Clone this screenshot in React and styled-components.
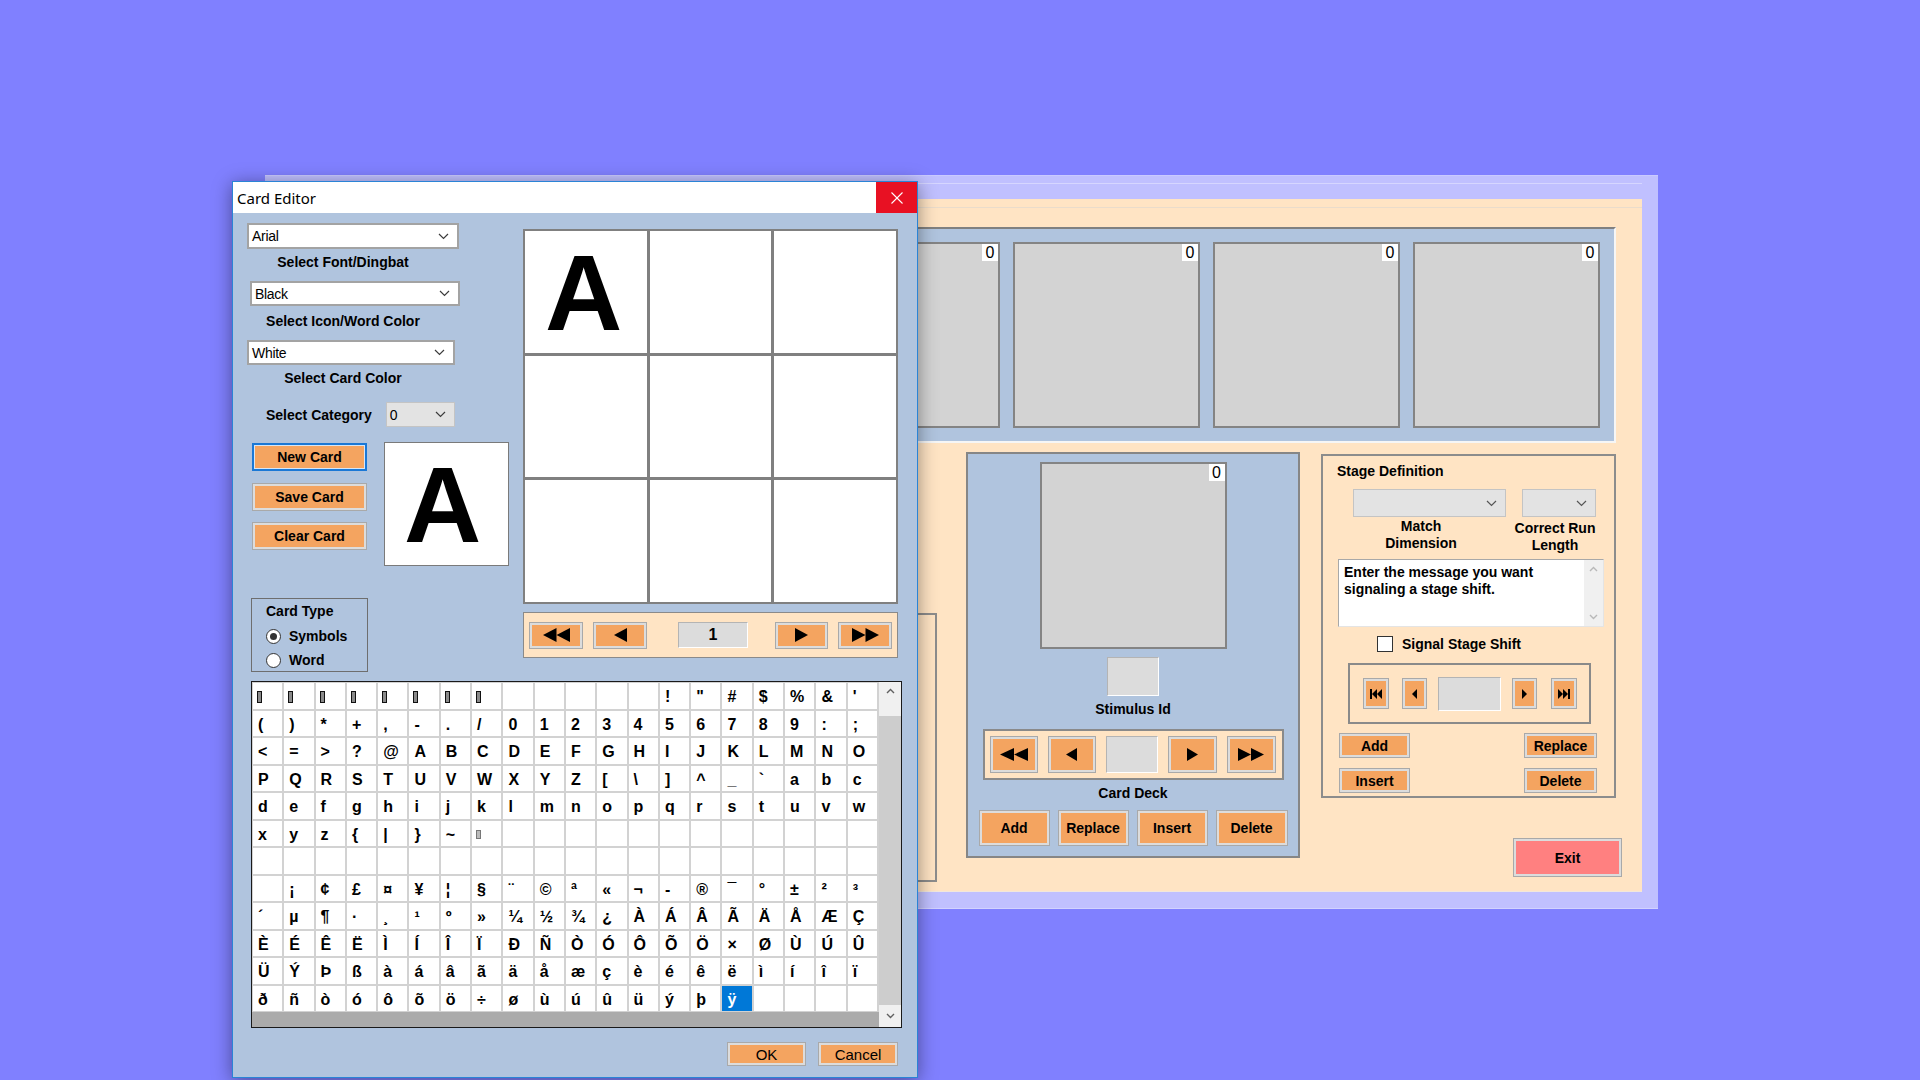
import React from 'react';
import styled, { createGlobalStyle } from 'styled-components';

const Global = createGlobalStyle`
  html, body { margin: 0; padding: 0; }
  body {
    width: 1920px; height: 1080px; overflow: hidden;
    background: #8080ff;
    font-family: "Liberation Sans", Arial, sans-serif;
    color: #000;
  }
  #root { position: relative; width: 1920px; height: 1080px; }
`;

const Desktop = styled.div`
  position: relative;
  width: 1920px;
  height: 1080px;
  background: #8080ff;
  overflow: hidden;
`;

/* ---------- shared ---------- */
const Btn = styled.div`
  box-sizing: border-box;
  flex: none;
  width: ${p => p.$w}px;
  height: ${p => p.$h}px;
  margin-top: ${p => p.$mt || 0}px;
  margin-left: ${p => p.$ml || 0}px;
  background: ${p => p.$bg || '#f4a460'};
  border: ${p => (p.$focus ? '2px solid #1a78d6' : '1px solid #a9a9a9')};
  box-shadow: ${p => (p.$focus ? 'inset 0 0 0 1px #d6e6f6' : 'inset 0 0 0 2px #dcdcdc')};
  display: flex;
  align-items: center;
  justify-content: center;
  font-size: ${p => (p.$regular ? 15 : 14)}px;
  font-weight: ${p => (p.$regular ? 400 : 700)};
  color: #000;
  white-space: nowrap;
`;

const Label = styled.div`
  font-size: 14px;
  font-weight: 700;
  line-height: 16px;
  white-space: nowrap;
  margin-top: ${p => p.$mt || 0}px;
  margin-left: ${p => p.$ml || 0}px;
  text-align: ${p => p.$align || 'left'};
  width: ${p => (p.$w ? `${p.$w}px` : 'auto')};
  flex: none;
`;

const Sunken = styled.div`
  box-sizing: border-box;
  flex: none;
  width: ${p => p.$w}px;
  height: ${p => p.$h}px;
  margin-top: ${p => p.$mt || 0}px;
  margin-left: ${p => p.$ml || 0}px;
  background: #dcdcdc;
  border: 1px solid;
  border-color: #b4b4b4 #ffffff #ffffff #b4b4b4;
  display: flex;
  align-items: center;
  justify-content: center;
  font-size: 16px;
  font-weight: 700;
`;

const Chevron = ({ color = '#3c3c3c' }) => (
  <svg width="11" height="7" viewBox="0 0 11 7" style={{ flex: 'none' }}>
    <polyline points="1,1 5.5,5.5 10,1" fill="none" stroke={color} strokeWidth="1.2" />
  </svg>
);

const ComboBox = styled.div`
  box-sizing: border-box;
  flex: none;
  width: ${p => p.$w}px;
  height: ${p => p.$h}px;
  margin-top: ${p => p.$mt || 0}px;
  margin-left: ${p => p.$ml || 0}px;
  background: ${p => (p.$disabled ? '#e3e3e3' : '#ffffff')};
  border: ${p => (p.$disabled ? '1px solid #c4c4c4' : '2px solid #a3a3a3')};
  display: flex;
  align-items: center;
  padding: 0 8px 0 3px;
  font-size: 14px;
  letter-spacing: -0.3px;
  color: #000;
`;

const ComboText = styled.span`
  flex: 1;
`;

/* Nav glyphs */
const NavGlyph = ({ kind, w, h }) => {
  const half = w / 2;
  let shapes;
  if (kind === 'prev') shapes = <polygon points={`${w},0 0,${h / 2} ${w},${h}`} />;
  else if (kind === 'next') shapes = <polygon points={`0,0 ${w},${h / 2} 0,${h}`} />;
  else if (kind === 'first')
    shapes = (
      <>
        <polygon points={`${half},0 0,${h / 2} ${half},${h}`} />
        <polygon points={`${w},0 ${half},${h / 2} ${w},${h}`} />
      </>
    );
  else if (kind === 'last')
    shapes = (
      <>
        <polygon points={`0,0 ${half},${h / 2} 0,${h}`} />
        <polygon points={`${half},0 ${w},${h / 2} ${half},${h}`} />
      </>
    );
  else if (kind === 'barFirst')
    shapes = (
      <>
        <rect x="0" y="0" width="2" height={h} />
        <polygon points={`${2 + (w - 2) / 2},0 2,${h / 2} ${2 + (w - 2) / 2},${h}`} />
        <polygon points={`${w},0 ${2 + (w - 2) / 2},${h / 2} ${w},${h}`} />
      </>
    );
  else if (kind === 'barLast')
    shapes = (
      <>
        <polygon points={`0,0 ${(w - 2) / 2},${h / 2} 0,${h}`} />
        <polygon points={`${(w - 2) / 2},0 ${w - 2},${h / 2} ${(w - 2) / 2},${h}`} />
        <rect x={w - 2} y="0" width="2" height={h} />
      </>
    );
  return (
    <svg width={w} height={h} viewBox={`0 0 ${w} ${h}`} fill="#000" style={{ display: 'block' }}>
      {shapes}
    </svg>
  );
};

/* ---------- Main window ---------- */
const MainWindow = styled.div`
  position: absolute;
  left: 265px;
  top: 175px;
  width: 1393px;
  height: 734px;
  box-sizing: border-box;
  background: #c0c0ff;
  border-top: 1px solid #cacaff;
  border-bottom: 1px solid #d2d2ff;
  padding: 7px 16px 16px 16px;
  display: flex;
  flex-direction: column;
`;

const MainRule = styled.div`
  flex: none;
  height: 1px;
  background: #d6d6ff;
  margin-bottom: 15px;
`;

const Peach = styled.div`
  flex: 1;
  background: #ffe4c4;
  display: flex;
  flex-direction: column;
  border-bottom: 1px solid #f1e7dc;
`;

const PeachRule = styled.div`
  flex: none;
  height: 1px;
  margin-top: 8px;
  background: #eadccb;
`;

const TopPanel = styled.div`
  flex: none;
  box-sizing: border-box;
  margin-top: 19px;
  margin-left: 119px;
  width: 1216px;
  height: 216px;
  background: #b0c4de;
  border: 2px solid;
  border-color: #808080 #f6f6f6 #f6f6f6 #808080;
  display: flex;
  justify-content: flex-end;
  gap: 13px;
  padding: 13px 14px 0 0;
`;

const Card = styled.div`
  position: relative;
  flex: none;
  box-sizing: border-box;
  width: 187px;
  height: ${p => p.$h || 186}px;
  margin-top: ${p => p.$mt || 0}px;
  background: #d3d3d3;
  border: 2px solid #848484;
`;

const CountBadge = styled.div`
  position: absolute;
  top: 0;
  right: 0;
  width: 16px;
  height: 17px;
  background: #fff;
  font-size: 16px;
  line-height: 17px;
  text-align: center;
`;

const LowerRow = styled.div`
  flex: none;
  display: flex;
  align-items: flex-start;
  margin-top: 9px;
`;

const HiddenBox = styled.div`
  flex: none;
  box-sizing: border-box;
  margin-left: 19px;
  margin-top: 161px;
  width: 637px;
  height: 269px;
  border: 2px solid #8c8c8c;
  background: #ffe4c4;
`;

const DeckPanel = styled.div`
  flex: none;
  box-sizing: border-box;
  margin-left: 29px;
  width: 334px;
  height: 406px;
  background: #b0c4de;
  border: 2px solid #868686;
  display: flex;
  flex-direction: column;
  align-items: center;
  padding-top: 8px;
`;

const NavStrip = styled.div`
  flex: none;
  box-sizing: border-box;
  width: ${p => p.$w}px;
  height: ${p => p.$h}px;
  margin-top: ${p => p.$mt || 0}px;
  margin-left: ${p => p.$ml || 0}px;
  background: #ffe4c4;
  border: ${p => p.$bw || 2}px solid #8a8a8a;
  display: flex;
  align-items: center;
  padding-left: ${p => p.$pl}px;
  gap: ${p => (p.$gap ? `${p.$gap}px` : '0')};
`;

const ButtonRow = styled.div`
  flex: none;
  display: flex;
  gap: ${p => p.$gap}px;
  margin-top: ${p => p.$mt || 0}px;
`;

const RightCol = styled.div`
  flex: none;
  margin-left: 21px;
  display: flex;
  flex-direction: column;
  align-items: flex-start;
`;

const StageDef = styled.div`
  flex: none;
  box-sizing: border-box;
  margin-top: 2px;
  width: 295px;
  height: 344px;
  background: #ffe4c4;
  border: 2px solid #8c8c8c;
  display: flex;
  flex-direction: column;
  align-items: flex-start;
`;

const ComboRow = styled.div`
  flex: none;
  display: flex;
  align-items: flex-start;
  margin-top: 10px;
  margin-left: 30px;
  gap: 16px;
`;

const ComboCol = styled.div`
  flex: none;
  width: ${p => p.$w}px;
  display: flex;
  flex-direction: column;
  align-items: center;
`;

const TwoLine = styled.div`
  font-size: 14px;
  font-weight: 700;
  line-height: 17px;
  text-align: center;
  white-space: nowrap;
  margin-top: ${p => p.$mt}px;
  margin-left: ${p => p.$dx || 0}px;
`;

const MessageBox = styled.div`
  flex: none;
  box-sizing: border-box;
  width: 266px;
  height: 68px;
  margin-top: 5px;
  margin-left: 15px;
  background: #fff;
  border: 1px solid;
  border-color: #a8a8a8 #e4e4e4 #e4e4e4 #a8a8a8;
  display: flex;
`;

const MessageText = styled.div`
  flex: 1;
  padding: 4px 0 0 5px;
  font-size: 14px;
  font-weight: 700;
  line-height: 17px;
`;

const VScroll = styled.div`
  flex: none;
  width: ${p => p.$w}px;
  background: #f0f0f0;
  display: flex;
  flex-direction: column;
  align-items: center;
  justify-content: space-between;
  padding: 6px 0;
  box-sizing: border-box;
`;

const CheckRow = styled.div`
  flex: none;
  display: flex;
  align-items: center;
  gap: 9px;
  margin-top: 9px;
  margin-left: 54px;
  height: 16px;
`;

const CheckBox = styled.div`
  box-sizing: border-box;
  width: 16px;
  height: 16px;
  background: #fff;
  border: 1px solid #333;
`;

const StageBtnGrid = styled.div`
  flex: none;
  width: 258px;
  margin-top: 9px;
  margin-left: 16px;
  display: grid;
  grid-template-columns: 71px 73px;
  justify-content: space-between;
  row-gap: 10px;
`;

/* ---------- Dialog ---------- */
const Dialog = styled.div`
  position: absolute;
  left: 232px;
  top: 181px;
  width: 686px;
  height: 897px;
  box-sizing: border-box;
  border: 1px solid #2a84d6;
  background: #b0c4de;
  box-shadow: 0 3px 18px rgba(0, 0, 0, 0.42);
  display: flex;
  flex-direction: column;
`;

const TitleBar = styled.div`
  flex: none;
  height: 31px;
  background: #fff;
  display: flex;
  align-items: center;
`;

const TitleText = styled.div`
  padding-left: 4px;
  font-family: "Noto Sans", "Open Sans", sans-serif;
  font-size: 15px;
  color: #000;
`;

const CloseBtn = styled.div`
  margin-left: auto;
  width: 41px;
  height: 31px;
  background: #e81123;
  display: flex;
  align-items: center;
  justify-content: center;
`;

const DialogBody = styled.div`
  flex: 1;
  display: flex;
  flex-direction: column;
  padding: 10px 18px 0 14px;
`;

const TopSection = styled.div`
  flex: none;
  display: flex;
  align-items: flex-start;
  gap: 14px;
`;

const LeftCol = styled.div`
  flex: none;
  width: 262px;
  display: flex;
  flex-direction: column;
  align-items: flex-start;
`;

const CategoryRow = styled.div`
  flex: none;
  display: flex;
  align-items: center;
  height: 25px;
  margin-top: 16px;
`;

const ActionRow = styled.div`
  flex: none;
  display: flex;
  align-items: flex-start;
  margin-top: 15px;
`;

const ActionButtons = styled.div`
  flex: none;
  margin-left: 5px;
  width: 115px;
  display: flex;
  flex-direction: column;
`;

const Preview = styled.div`
  flex: none;
  box-sizing: border-box;
  margin-left: 17px;
  width: 125px;
  height: 124px;
  background: #fff;
  border: 1px solid #7a7a7a;
  overflow: hidden;
`;

const BigGlyph = styled.div`
  font-family: "Liberation Sans", Arial, sans-serif;
  font-weight: 700;
  font-size: 107px;
  line-height: 1;
  padding: ${p => p.$pt}px 0 0 ${p => p.$pl}px;
`;

const CardTypeBox = styled.div`
  flex: none;
  box-sizing: border-box;
  margin-top: 32px;
  margin-left: 4px;
  width: 117px;
  height: 74px;
  border: 1px solid #6e6e6e;
  padding: 4px 0 0 14px;
  display: flex;
  flex-direction: column;
`;

const RadioRow = styled.div`
  display: flex;
  align-items: center;
  gap: 8px;
  height: 16px;
  margin-top: ${p => p.$mt}px;
  font-size: 14px;
  font-weight: 700;
`;

const Radio = styled.div`
  box-sizing: border-box;
  width: 15px;
  height: 15px;
  border-radius: 50%;
  border: 1px solid #333;
  background: #fff;
  display: flex;
  align-items: center;
  justify-content: center;
  &::after {
    content: '';
    display: ${p => (p.$on ? 'block' : 'none')};
    width: 7px;
    height: 7px;
    border-radius: 50%;
    background: #333;
  }
`;

const RightColDlg = styled.div`
  flex: none;
  width: 375px;
  margin-top: 6px;
  display: flex;
  flex-direction: column;
`;

const Grid3 = styled.div`
  width: 375px;
  height: 375px;
  box-sizing: border-box;
  background: #808080;
  padding: 2px;
  display: grid;
  grid-template-columns: repeat(3, 1fr);
  grid-template-rows: repeat(3, 1fr);
  gap: 3px;
`;

const GridCell = styled.div`
  background: #fff;
  overflow: hidden;
`;

const CharGridBox = styled.div`
  flex: none;
  box-sizing: border-box;
  margin-top: 9px;
  margin-left: 4px;
  width: 651px;
  height: 347px;
  border: 1px solid #1a1a1a;
  background: #ababab;
  display: flex;
  align-items: flex-start;
`;

const CellArea = styled.div`
  flex: 1;
  display: grid;
  grid-template-columns: repeat(20, 1fr);
  grid-auto-rows: 25.5px;
  gap: 2px;
  padding: 1px 2px 1px 1px;
  background: #d2d2d2;
`;

const CharCell = styled.div`
  background: ${p => (p.$sel ? '#0078d7' : '#fff')};
  color: ${p => (p.$sel ? '#fff' : '#000')};
  font-family: "Liberation Sans", Arial, sans-serif;
  font-weight: 700;
  font-size: 16px;
  line-height: 25.5px;
  padding: 2px 0 0 5px;
  box-sizing: border-box;
  white-space: nowrap;
  overflow: hidden;
  display: flex;
  align-items: center;
`;

const Tofu = styled.span`
  display: inline-block;
  box-sizing: border-box;
  width: 5px;
  height: ${p => (p.$light ? 9 : 12)}px;
  border: 1.5px solid ${p => (p.$light ? '#777' : '#111')};
  background: ${p => (p.$light ? '#bbb' : '#8a8a8a')};
  margin-left: -1px;
`;

const GridScroll = styled.div`
  flex: none;
  align-self: stretch;
  width: 22px;
  display: flex;
  flex-direction: column;
`;

const ScrollCap = styled.div`
  flex: none;
  height: ${p => p.$h}px;
  background: #f0f0f0;
  display: flex;
  align-items: ${p => p.$align || 'center'};
  justify-content: center;
  padding-top: ${p => p.$pt || 0}px;
  box-sizing: border-box;
`;

const ScrollThumb = styled.div`
  flex: 1;
  background: #cdcdcd;
`;

const Footer = styled.div`
  flex: none;
  display: flex;
  justify-content: flex-end;
  gap: 12px;
  margin-top: 14px;
  margin-right: 1px;
`;

const ArrowSmall = ({ up, color = '#606060' }) => (
  <svg width="9" height="6" viewBox="0 0 9 6">
    <polyline
      points={up ? '1,5 4.5,1.5 8,5' : '1,1 4.5,4.5 8,1'}
      fill="none"
      stroke={color}
      strokeWidth="1.4"
    />
  </svg>
);

function charFor(c) {
  if (c >= 0x14 && c <= 0x1b) return <Tofu />;
  if (c === 0x7f) return <Tofu $light />;
  if (c <= 0x20 || (c >= 0x80 && c <= 0xa0) || c > 0xff) return null;
  if (c === 0xad) return '-';
  return String.fromCharCode(c);
}

const codes = Array.from({ length: 240 }, (_, i) => 0x14 + i);

export default function App() {
  return (
    <Desktop>
      <Global />

      <MainWindow>
        <MainRule />
        <Peach>
          <PeachRule />
          <TopPanel>
            {[0, 1, 2, 3, 4, 5].map(i => (
              <Card key={i}>
                <CountBadge>0</CountBadge>
              </Card>
            ))}
          </TopPanel>

          <LowerRow>
            <HiddenBox />

            <DeckPanel>
              <Card $h={187}>
                <CountBadge>0</CountBadge>
              </Card>
              <Sunken $w={52} $h={39} $mt={8} />
              <Label $mt={5}>Stimulus Id</Label>
              <NavStrip $w={301} $h={51} $mt={12} $pl={5} $gap={10}>
                <Btn $w={48} $h={37}><NavGlyph kind="first" w={28} h={13} /></Btn>
                <Btn $w={48} $h={37}><NavGlyph kind="prev" w={11} h={13} /></Btn>
                <Sunken $w={52} $h={37} />
                <Btn $w={49} $h={37}><NavGlyph kind="next" w={11} h={13} /></Btn>
                <Btn $w={49} $h={37}><NavGlyph kind="last" w={26} h={13} /></Btn>
              </NavStrip>
              <Label $mt={5}>Card Deck</Label>
              <ButtonRow $gap={8} $mt={9}>
                <Btn $w={71} $h={36}>Add</Btn>
                <Btn $w={71} $h={36}>Replace</Btn>
                <Btn $w={71} $h={36}>Insert</Btn>
                <Btn $w={72} $h={36}>Delete</Btn>
              </ButtonRow>
            </DeckPanel>

            <RightCol>
              <StageDef>
                <Label $mt={7} $ml={14}>Stage Definition</Label>
                <ComboRow>
                  <ComboCol $w={153}>
                    <ComboBox $w={153} $h={28} $disabled>
                      <ComboText />
                      <Chevron color="#555" />
                    </ComboBox>
                    <TwoLine $mt={1} $dx={-17}>Match<br />Dimension</TwoLine>
                  </ComboCol>
                  <ComboCol $w={74}>
                    <ComboBox $w={74} $h={28} $disabled>
                      <ComboText />
                      <Chevron color="#555" />
                    </ComboBox>
                    <TwoLine $mt={3} $dx={-8}>Correct Run<br />Length</TwoLine>
                  </ComboCol>
                </ComboRow>
                <MessageBox>
                  <MessageText>
                    Enter the message you want
                    <br />
                    signaling a stage shift.
                  </MessageText>
                  <VScroll $w={19}>
                    <ArrowSmall up color="#b8b8b8" />
                    <ArrowSmall color="#b8b8b8" />
                  </VScroll>
                </MessageBox>
                <CheckRow>
                  <CheckBox />
                  <Label>Signal Stage Shift</Label>
                </CheckRow>
                <NavStrip $w={243} $h={61} $mt={11} $ml={25} $pl={13}>
                  <Btn $w={26} $h={31}><NavGlyph kind="barFirst" w={12} h={10} /></Btn>
                  <Btn $w={25} $h={31} $ml={13}><NavGlyph kind="prev" w={5} h={10} /></Btn>
                  <Sunken $w={63} $h={34} $ml={11} />
                  <Btn $w={25} $h={31} $ml={11}><NavGlyph kind="next" w={5} h={10} /></Btn>
                  <Btn $w={26} $h={31} $ml={14}><NavGlyph kind="barLast" w={12} h={10} /></Btn>
                </NavStrip>
                <StageBtnGrid>
                  <Btn $w={71} $h={25}>Add</Btn>
                  <Btn $w={73} $h={25}>Replace</Btn>
                  <Btn $w={71} $h={25}>Insert</Btn>
                  <Btn $w={73} $h={25}>Delete</Btn>
                </StageBtnGrid>
              </StageDef>
              <Btn $w={109} $h={39} $mt={40} $ml={192} $bg="#ff8080">Exit</Btn>
            </RightCol>
          </LowerRow>
        </Peach>
      </MainWindow>

      <Dialog>
        <TitleBar>
          <TitleText>Card Editor</TitleText>
          <CloseBtn>
            <svg width="12" height="12" viewBox="0 0 12 12">
              <line x1="0.5" y1="0.5" x2="11.5" y2="11.5" stroke="#fff" strokeWidth="1.1" />
              <line x1="11.5" y1="0.5" x2="0.5" y2="11.5" stroke="#fff" strokeWidth="1.1" />
            </svg>
          </CloseBtn>
        </TitleBar>

        <DialogBody>
          <TopSection>
            <LeftCol>
              <ComboBox $w={212} $h={26}>
                <ComboText>Arial</ComboText>
                <Chevron />
              </ComboBox>
              <Label $mt={5} $w={192} $align="center">Select Font/Dingbat</Label>
              <ComboBox $w={210} $h={25} $mt={11} $ml={3}>
                <ComboText>Black</ComboText>
                <Chevron />
              </ComboBox>
              <Label $mt={7} $w={192} $align="center">Select Icon/Word Color</Label>
              <ComboBox $w={208} $h={25} $mt={11}>
                <ComboText>White</ComboText>
                <Chevron />
              </ComboBox>
              <Label $mt={5} $w={192} $align="center">Select Card Color</Label>
              <CategoryRow>
                <Label $ml={19}>Select Category</Label>
                <ComboBox $w={69} $h={25} $ml={14} $disabled>
                  <ComboText>0</ComboText>
                  <Chevron />
                </ComboBox>
              </CategoryRow>
              <ActionRow>
                <ActionButtons>
                  <Btn $w={115} $h={28} $mt={1} $focus>New Card</Btn>
                  <Btn $w={115} $h={28} $mt={12}>Save Card</Btn>
                  <Btn $w={115} $h={28} $mt={11}>Clear Card</Btn>
                </ActionButtons>
                <Preview>
                  <BigGlyph $pt={9} $pl={19}>A</BigGlyph>
                </Preview>
              </ActionRow>
              <CardTypeBox>
                <Label>Card Type</Label>
                <RadioRow $mt={9}>
                  <Radio $on />
                  <span>Symbols</span>
                </RadioRow>
                <RadioRow $mt={8}>
                  <Radio />
                  <span>Word</span>
                </RadioRow>
              </CardTypeBox>
            </LeftCol>

            <RightColDlg>
              <Grid3>
                <GridCell>
                  <BigGlyph $pt={9} $pl={20}>A</BigGlyph>
                </GridCell>
                {[1, 2, 3, 4, 5, 6, 7, 8].map(i => (
                  <GridCell key={i} />
                ))}
              </Grid3>
              <NavStrip $w={375} $h={46} $mt={8} $pl={5} $bw={1}>
                <Btn $w={54} $h={27}><NavGlyph kind="first" w={27} h={14} /></Btn>
                <Btn $w={54} $h={27} $ml={10}><NavGlyph kind="prev" w={13} h={14} /></Btn>
                <Sunken $w={70} $h={26} $ml={31}>1</Sunken>
                <Btn $w={53} $h={27} $ml={27}><NavGlyph kind="next" w={13} h={14} /></Btn>
                <Btn $w={54} $h={27} $ml={10}><NavGlyph kind="last" w={27} h={14} /></Btn>
              </NavStrip>
            </RightColDlg>
          </TopSection>

          <CharGridBox>
            <CellArea>
              {codes.map(c => (
                <CharCell key={c} $sel={c === 0xff}>
                  {charFor(c)}
                </CharCell>
              ))}
            </CellArea>
            <GridScroll>
              <ScrollCap $h={34} $align="flex-start" $pt={6}>
                <ArrowSmall up />
              </ScrollCap>
              <ScrollThumb />
              <ScrollCap $h={22}>
                <ArrowSmall />
              </ScrollCap>
            </GridScroll>
          </CharGridBox>

          <Footer>
            <Btn $w={79} $h={24} $regular>OK</Btn>
            <Btn $w={80} $h={24} $regular>Cancel</Btn>
          </Footer>
        </DialogBody>
      </Dialog>
    </Desktop>
  );
}
